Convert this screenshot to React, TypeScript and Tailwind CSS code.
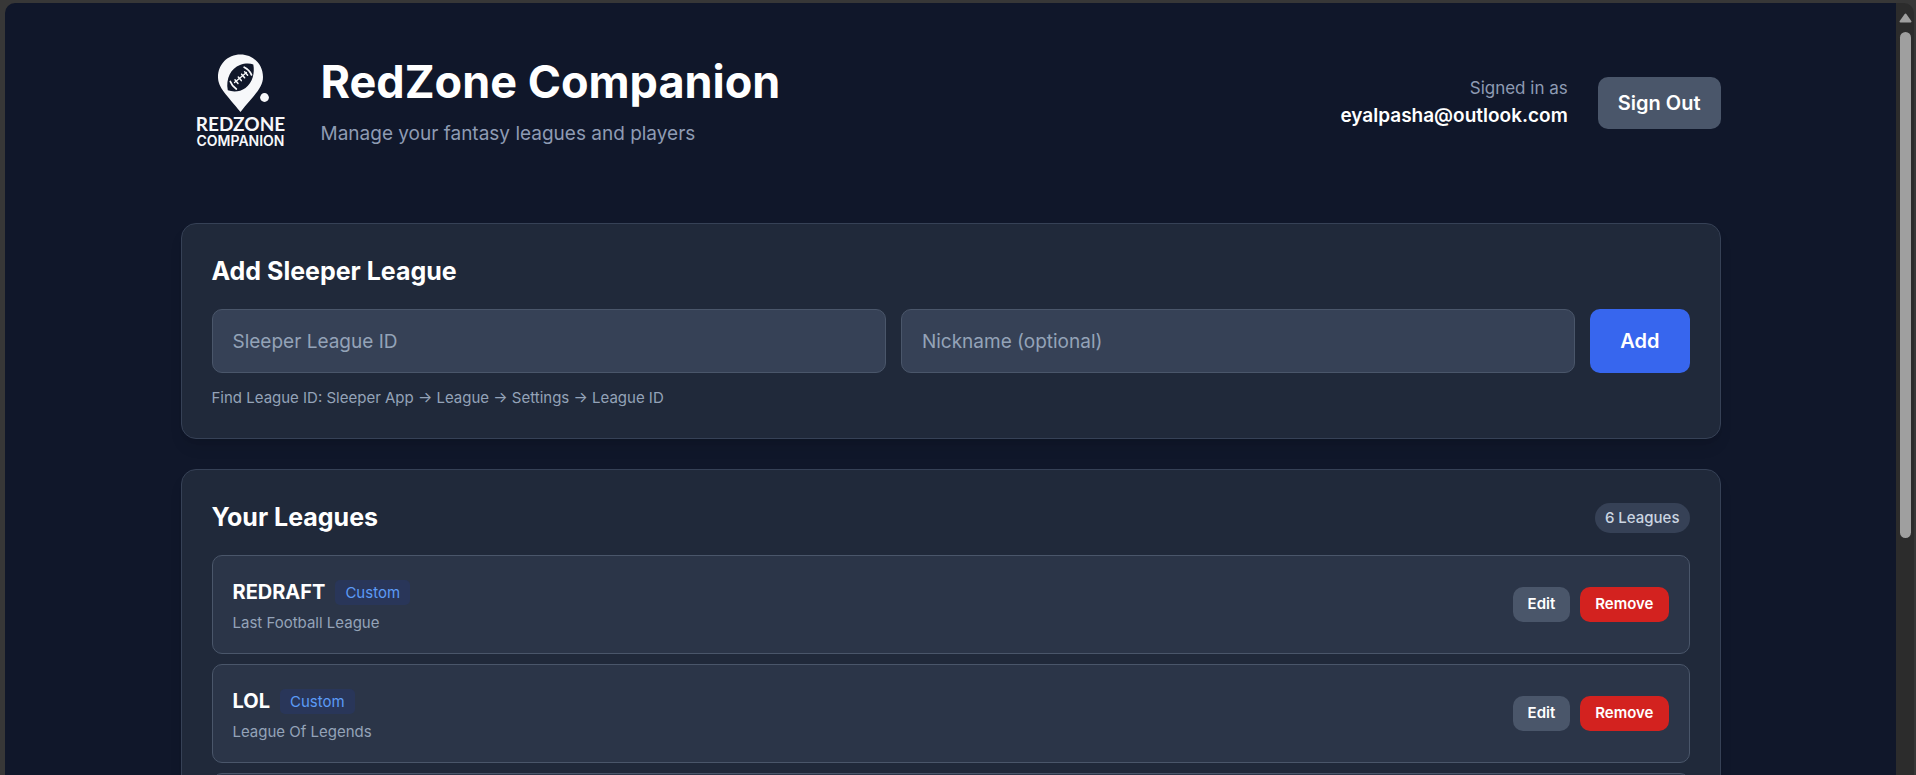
import React from "react";

type League = { name: string; detail: string; custom: boolean };

const leagues: League[] = [
  { name: "REDRAFT", detail: "Last Football League", custom: true },
  { name: "LOL", detail: "League Of Legends", custom: true },
];

function Logo() {
  return (
    <svg viewBox="0 0 100 110" className="h-[110px] w-[100px]" role="img" aria-label="RedZone Companion logo">
      <path
        d="M50.5 8.5 C37.5 8.5 28 18.5 28 31 C28 42 37 49 50.5 66 C64 49 73 42 73 31 C73 18.5 63.5 8.5 50.5 8.5Z"
        fill="#f7f8fa"
      />
      <circle cx="74.5" cy="51.5" r="4.4" fill="#f7f8fa" />
      <path
        d="M37.8 44.3 C35.5 33 41 22 50 19 C55 17.2 60 17.3 63.3 18.5 C65 27 62.5 36.5 55.5 42 C50 46 43 46.2 37.8 44.3Z"
        fill="#10172a"
      />
      <g stroke="#f7f8fa" strokeLinecap="round" fill="none">
        <path d="M44.5 36.5 L56.5 26.5" strokeWidth="1.3" />
        <path
          d="M45 33.8 L48 37.4 M48.3 31 L51.3 34.6 M51.6 28.2 L54.6 31.8 M54.6 25.8 L57.6 29.2"
          strokeWidth="1.5"
        />
        <path d="M40.3 35.5 Q41.8 39.8 46.3 43" strokeWidth="1.8" />
        <path d="M54.2 21.3 Q59.5 24 61.5 28.8" strokeWidth="1.8" />
      </g>
      <text x="50.5" y="85" textAnchor="middle" fill="#f7f8fa" className="font-['Lato'] text-[19px] font-bold">
        REDZONE
      </text>
      <text x="50.5" y="100" textAnchor="middle" fill="#f7f8fa" className="font-['Inter'] text-[14px] font-semibold">
        COMPANION
      </text>
    </svg>
  );
}

function LeagueRow({ league }: { league: League }) {
  return (
    <li className="flex items-center justify-between rounded-[10px] border border-[#4a566a] bg-[#2b3548] p-5">
      <div>
        <div className="flex h-8 items-center gap-[10px]">
          <h3 className="text-[20px] font-bold">{league.name}</h3>
          {league.custom && (
            <span className="rounded-[5px] bg-[#293659] px-[10px] text-[15px] leading-[25px] text-[#5c9bf6]">Custom</span>
          )}
        </div>
        <p className="mt-[5px] text-[15px] leading-5 text-[#94a3b8]">{league.detail}</p>
      </div>
      <div className="flex gap-[10px]">
        <button type="button" className="h-[35px] rounded-[10px] bg-[#4a566a] px-[15px] text-[15px] font-semibold">
          Edit
        </button>
        <button type="button" className="h-[35px] rounded-[10px] bg-[#d3221f] px-[15px] text-[15px] font-semibold">
          Remove
        </button>
      </div>
    </li>
  );
}

export default function App() {
  const field =
    "h-16 min-w-0 flex-1 rounded-[10px] border border-[#4a566a] bg-[#364156] px-5 text-[19px] placeholder:text-[#94a3b8] outline-none";
  const card = "rounded-[15px] border border-[#364156] bg-[#20293a] p-[30px] shadow-lg";
  return (
    <div className="flex h-screen overflow-hidden bg-[#373737] pt-[3px] pr-[2px] pl-[5px] font-['Inter',sans-serif] text-white">
      <div className="min-w-0 flex-1 overflow-hidden rounded-tl-[10px] bg-[#10172a]">
        <div className="mx-auto flex max-w-[1600px] flex-col px-[30px] pt-[37px]">
          <header className="mb-[57px] flex h-[126px] items-center justify-between">
            <div className="flex items-center gap-[31px]">
              <div className="pb-[4px] pl-[9px]">
                <Logo />
              </div>
              <div>
                <h1 className="text-[45px] leading-[50px] font-bold">RedZone Companion</h1>
                <p className="mt-3 text-[19px] leading-[30px] text-[#8e9bb3]">Manage your fantasy leagues and players</p>
              </div>
            </div>
            <div className="flex items-center gap-[30px]">
              <div className="text-right">
                <p className="text-[17px] leading-[25px] text-[#8e9bb3]">Signed in as</p>
                <p className="text-[19px] leading-[30px] font-semibold">eyalpasha@outlook.com</p>
              </div>
              <button type="button" className="h-[52px] rounded-[10px] bg-[#4a566a] px-5 text-[20px] font-semibold">
                Sign Out
              </button>
            </div>
          </header>
          <main className="flex flex-col gap-[30px]">
            <section className={card}>
              <h2 className="mb-5 text-[25px] leading-[35px] font-bold">Add Sleeper League</h2>
              <form className="flex gap-[15px]" onSubmit={(e) => e.preventDefault()}>
                <input aria-label="Sleeper League ID" placeholder="Sleeper League ID" className={field} />
                <input aria-label="Nickname (optional)" placeholder="Nickname (optional)" className={field} />
                <button type="submit" className="rounded-[10px] bg-[#3766ee] px-[30px] text-[20px] font-semibold">
                  Add
                </button>
              </form>
              <p className="mt-[15px] text-[15px] leading-5 text-[#94a3b8]">
                Find League ID: Sleeper App → League → Settings → League ID
              </p>
            </section>
            <section className={card}>
              <div className="mb-5 flex h-[35px] items-center justify-between">
                <h2 className="text-[25px] leading-[35px] font-bold">Your Leagues</h2>
                <span className="rounded-full bg-[#364156] px-[10px] text-[15px] leading-[30px] font-medium text-[#cbd5e1]">
                  6 Leagues
                </span>
              </div>
              <ul className="flex flex-col gap-[10px]">
                {leagues.map((league) => (
                  <LeagueRow key={league.name} league={league} />
                ))}
                <li className="h-[99px] rounded-[10px] border border-[#4a566a] bg-[#2b3548]" />
              </ul>
            </section>
          </main>
        </div>
      </div>
      <div className="flex w-[18px] flex-col items-center rounded-tr-[10px] bg-[#2c2c2c] pt-[10px]" aria-hidden="true">
        <svg viewBox="0 0 13 10" className="h-[10px] w-[13px]">
          <path d="M6.5 1.5 L11.5 8.5 H1.5Z" fill="#9f9f9f" stroke="#9f9f9f" strokeWidth="2" strokeLinejoin="round" />
        </svg>
        <div className="mt-[9px] h-[506px] w-[11px] rounded-full bg-[#9f9f9f]" />
      </div>
    </div>
  );
}
